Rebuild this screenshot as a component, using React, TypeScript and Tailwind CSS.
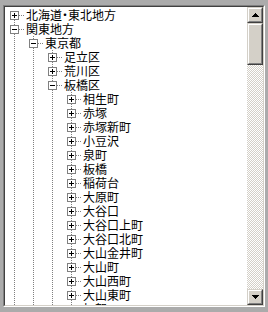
import React from "react";

type Node = {
  label: string;
  level: number;
  open: boolean;
};

const rows: Node[] = [
  { label: "北海道・東北地方", level: 0, open: false },
  { label: "関東地方", level: 0, open: true },
  { label: "東京都", level: 1, open: true },
  { label: "足立区", level: 2, open: false },
  { label: "荒川区", level: 2, open: false },
  { label: "板橋区", level: 2, open: true },
  ...[
    "相生町",
    "赤塚",
    "赤塚新町",
    "小豆沢",
    "泉町",
    "板橋",
    "稲荷台",
    "大原町",
    "大谷口",
    "大谷口上町",
    "大谷口北町",
    "大山金井町",
    "大山町",
    "大山西町",
    "大山東町",
    "加賀",
  ].map((label) => ({ label, level: 3, open: false })),
];

const DOTS = "#808080";

// column of an ancestor that still has siblings below: a full dotted line
const LineCell = () => (
  <svg width="19" height="14" className="block shrink-0" shapeRendering="crispEdges">
    <line x1="9.5" y1="0" x2="9.5" y2="14" stroke={DOTS} strokeDasharray="1 1" />
  </svg>
);

const NodeCell = ({ first, open }: { first: boolean; open: boolean }) => (
  <svg width="19" height="14" className="block shrink-0" shapeRendering="crispEdges">
    {!first && (
      <line x1="9.5" y1="0" x2="9.5" y2="7" stroke={DOTS} strokeDasharray="1 1" />
    )}
    <line x1="9.5" y1="8" x2="9.5" y2="14" stroke={DOTS} strokeDasharray="1 1" />
    <line x1="10" y1="7.5" x2="19" y2="7.5" stroke={DOTS} strokeDasharray="1 1" />
    <rect x="5.5" y="3.5" width="8" height="8" fill="#fff" stroke={DOTS} />
    <line x1="7" y1="7.5" x2="12" y2="7.5" stroke="#000" />
    {!open && <line x1="9.5" y1="5" x2="9.5" y2="10" stroke="#000" />}
  </svg>
);

const Arrow = ({ down }: { down?: boolean }) => (
  <svg width="7" height="4" className="block" shapeRendering="crispEdges">
    <path d={down ? "M0 0h7L3.5 4z" : "M3.5 0L7 4H0z"} fill="#000" />
  </svg>
);

const Raised = ({ className, children }: { className?: string; children?: React.ReactNode }) => (
  <div
    className={`border border-t-[#d4d0c8] border-l-[#d4d0c8] border-r-[#404040] border-b-[#404040] ${className ?? ""}`}
  >
    <div className="flex h-full w-full items-center justify-center border border-t-white border-l-white border-r-[#808080] border-b-[#808080] bg-[#d4d0c8]">
      {children}
    </div>
  </div>
);

const ScrollBar = () => (
  <div className="flex w-4 shrink-0 flex-col">
    <Raised className="h-4">
      <Arrow />
    </Raised>
    <Raised className="h-[42px]" />
    <div className="flex-1 bg-[repeating-conic-gradient(#d4d0c8_0_25%,#ffffff_0_50%)] bg-[length:2px_2px]" />
    <Raised className="h-4">
      <Arrow down />
    </Raised>
  </div>
);

export default function App() {
  return (
    <div className="h-[312px] w-[268px] overflow-hidden bg-[#ababab] pl-[3px] pt-[5px]">
      <div className="w-[262px] border-l border-t border-l-[#808080] border-t-[#808080] border-r border-b border-r-white border-b-white">
        <div className="flex h-[300px] border-l border-t border-l-[#404040] border-t-[#404040] border-r border-b border-r-[#d4d0c8] border-b-[#d4d0c8] bg-white">
          <div className="flex-1 overflow-hidden pt-px font-['Noto_Sans_CJK_JP',sans-serif] text-[12px] leading-[14px] text-black [font-feature-settings:'palt']">
            {rows.map((row, i) => (
              <div key={i} className="flex h-[14px] items-center whitespace-nowrap">
                {Array.from({ length: row.level }).map((_, j) => (
                  <LineCell key={j} />
                ))}
                <NodeCell first={i === 0} open={row.open} />
                <span className="ml-[2px]">{row.label}</span>
              </div>
            ))}
          </div>
          <ScrollBar />
        </div>
      </div>
    </div>
  );
}
